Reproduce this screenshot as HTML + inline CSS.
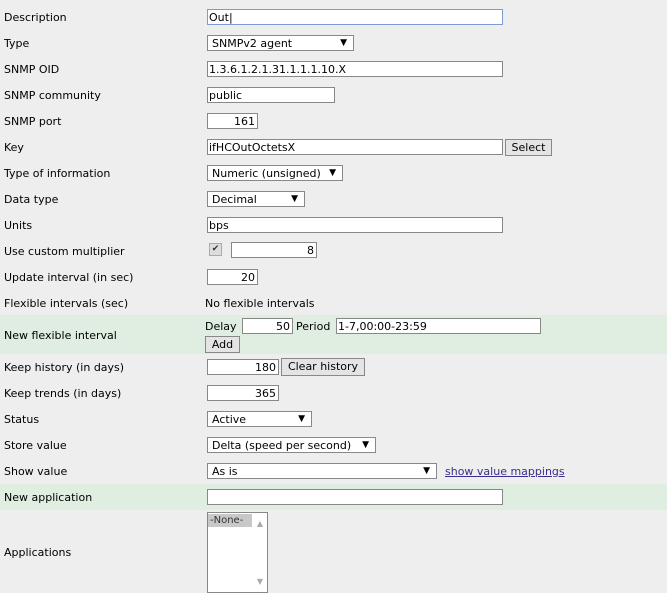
<!DOCTYPE html><html><head><style>
body{margin:0;width:667px;height:593px;background:#eeeeee;font-family:"DejaVu Sans","Liberation Sans",sans-serif;font-size:11px;color:#000;position:relative;overflow:hidden}
.a{position:absolute;white-space:nowrap;line-height:13px}
.l{position:absolute;left:4px;white-space:nowrap;line-height:13px}
.b{position:absolute;background:#fff;border:1px solid #888;box-sizing:border-box;line-height:15px;padding:0 2px;white-space:nowrap;overflow:hidden}
.r{text-align:right}
.s{padding-left:4px}
.s i{position:absolute;right:6px;top:0;font-style:normal;font-size:9px}
.btn{position:absolute;background:#e4e4e4;border:1px solid #888;box-sizing:border-box;line-height:15px;text-align:center;white-space:nowrap}
.g{position:absolute;left:0;width:667px;background:#dfeee0}
</style></head><body>
<div class="g" style="top:315px;height:39px"></div>
<div class="g" style="top:484px;height:26px"></div>

<div class="l" style="top:11px">Description</div>
<div class="b" style="left:207px;top:9px;width:296px;height:16px;border-color:#7a9cd3;padding-left:1px">Out|</div>
<div class="l" style="top:37px">Type</div>
<div class="b s" style="left:207px;top:35px;width:147px;height:16px">SNMPv2 agent<i>▼</i></div>
<div class="l" style="top:63px">SNMP OID</div>
<div class="b" style="left:207px;top:61px;width:296px;height:16px;padding-left:1px">1.3.6.1.2.1.31.1.1.1.10.X</div>
<div class="l" style="top:89px">SNMP community</div>
<div class="b" style="left:207px;top:87px;width:128px;height:16px;padding-left:1px">public</div>
<div class="l" style="top:115px">SNMP port</div>
<div class="b r" style="left:207px;top:113px;width:51px;height:16px">161</div>
<div class="l" style="top:141px">Key</div>
<div class="b" style="left:207px;top:139px;width:296px;height:16px;padding-left:1px">ifHCOutOctetsX</div>
<div class="btn" style="left:505px;top:139px;width:47px;height:17px">Select</div>
<div class="l" style="top:167px">Type of information</div>
<div class="b s" style="left:207px;top:165px;width:136px;height:16px">Numeric (unsigned)<i>▼</i></div>
<div class="l" style="top:193px">Data type</div>
<div class="b s" style="left:207px;top:191px;width:98px;height:16px">Decimal<i>▼</i></div>
<div class="l" style="top:219px">Units</div>
<div class="b" style="left:207px;top:217px;width:296px;height:16px;padding-left:1px">bps</div>
<div class="l" style="top:245px">Use custom multiplier</div>
<div class="a" style="left:209px;top:243px;width:11px;height:11px;border:1px solid #aaa;background:#ddd;font-size:9px;line-height:11px;text-align:center;color:#333">✔</div>
<div class="b r" style="left:231px;top:242px;width:86px;height:16px">8</div>
<div class="l" style="top:271px">Update interval (in sec)</div>
<div class="b r" style="left:207px;top:269px;width:51px;height:16px">20</div>
<div class="l" style="top:297px">Flexible intervals (sec)</div>
<div class="a" style="left:205px;top:297px">No flexible intervals</div>
<div class="l" style="top:329px">New flexible interval</div>
<div class="a" style="left:205px;top:320px">Delay</div>
<div class="b r" style="left:242px;top:318px;width:51px;height:16px">50</div>
<div class="a" style="left:296px;top:320px">Period</div>
<div class="b" style="left:336px;top:318px;width:205px;height:16px;padding-left:1px">1-7,00:00-23:59</div>
<div class="btn" style="left:205px;top:336px;width:35px;height:17px">Add</div>
<div class="l" style="top:361px">Keep history (in days)</div>
<div class="b r" style="left:207px;top:359px;width:72px;height:16px">180</div>
<div class="btn" style="left:281px;top:358px;width:84px;height:18px">Clear history</div>
<div class="l" style="top:387px">Keep trends (in days)</div>
<div class="b r" style="left:207px;top:385px;width:72px;height:16px">365</div>
<div class="l" style="top:413px">Status</div>
<div class="b s" style="left:207px;top:411px;width:105px;height:16px">Active<i>▼</i></div>
<div class="l" style="top:439px">Store value</div>
<div class="b s" style="left:207px;top:437px;width:169px;height:16px">Delta (speed per second)<i>▼</i></div>
<div class="l" style="top:465px">Show value</div>
<div class="b s" style="left:207px;top:463px;width:230px;height:16px">As is<i>▼</i></div>
<div class="a" style="left:445px;top:465px;color:#3a2f8f;text-decoration:underline">show value mappings</div>
<div class="l" style="top:491px">New application</div>
<div class="b" style="left:207px;top:489px;width:296px;height:16px"></div>
<div class="l" style="top:546px">Applications</div>
<div class="b" style="left:207px;top:512px;width:61px;height:81px;padding:0">
<div style="background:#c8c8c8;width:42px;padding-left:2px;line-height:13px;margin-top:1px;color:#333;font-size:10px">-None-</div>
<div style="position:absolute;right:4px;top:3px;color:#aaa;font-size:8px">▲</div>
<div style="position:absolute;right:4px;bottom:3px;color:#aaa;font-size:8px">▼</div>
</div>
</body></html>
